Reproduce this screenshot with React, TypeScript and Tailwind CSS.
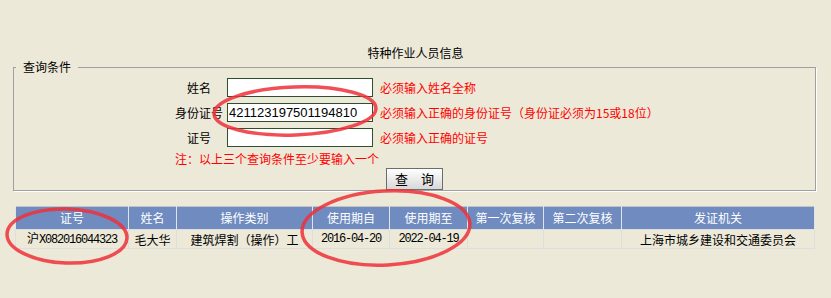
import React from "react";

const cols = [
  { title: "证号", cls: "w-[113px]" },
  { title: "姓名", cls: "w-[48px]" },
  { title: "操作类别", cls: "w-[136px]" },
  { title: "使用期自", cls: "w-[77px]" },
  { title: "使用期至", cls: "w-[78px]" },
  { title: "第一次复核", cls: "w-[76px]" },
  { title: "第二次复核", cls: "w-[78px]" },
  { title: "发证机关", cls: "w-[193px]" },
];

const QueryRow = ({ label, value, hint }: { label: string; value: string; hint: string }) => (
  <div className="flex h-[25px] items-center">
    <span className="w-[48px] text-center leading-[14px] whitespace-nowrap">{label}</span>
    <input
      readOnly
      defaultValue={value}
      className="ml-[4px] h-[19px] w-[146px] border border-[#2f4f2f] bg-white px-[1px] font-['Liberation_Sans',sans-serif] text-[13px] text-black outline-none"
    />
    <span className="ml-[7px] whitespace-nowrap leading-[14px] text-[#ff0000]">{hint}</span>
  </div>
);

export default function App() {
  return (
    <div className="relative h-[298px] w-[831px] overflow-hidden bg-[#ece9d8] pt-[46px] font-['Noto_Sans_CJK_SC',sans-serif] text-[12px] text-black">
      <div className="h-[14px] text-center leading-[14px]">特种作业人员信息</div>

      <fieldset className="ml-[13px] mr-[15px] border border-[#a0a0a0] p-0 shadow-[1px_1px_0_#ffffff]">
        <legend className="ml-[2px] px-[7px] leading-[14px]">查询条件</legend>
        <div className="pl-[161px] pt-[1px]">
          <QueryRow label="姓名" value="" hint="必须输入姓名全称" />
          <QueryRow
            label="身份证号"
            value="421123197501194810"
            hint="必须输入正确的身份证号（身份证必须为15或18位）"
          />
          <QueryRow label="证号" value="" hint="必须输入正确的证号" />
          <div className="h-[18px] leading-[18px] text-[#ff0000]">注：以上三个查询条件至少要输入一个</div>
          <div className="pl-[211px]">
            <button className="block h-[22px] w-[57px] border border-[#6d6d6d] bg-linear-to-b from-white to-[#d8d8d8] text-[13px] leading-[20px] text-black">
              查　询
            </button>
          </div>
        </div>
      </fieldset>

      <table className="ml-[15px] mt-[15px] w-[799px] table-fixed border-collapse border border-[#c3c3c3]">
        <thead>
          <tr className="h-[23px] bg-[#6f8bc0] text-white">
            {cols.map((c) => (
              <th key={c.title} className={`${c.cls} border-x border-[#dfe3ea] p-0 text-center font-normal leading-[14px]`}>
                {c.title}
              </th>
            ))}
          </tr>
        </thead>
        <tbody>
          <tr className="h-[17px]">
            <td className="border border-[#dedede] p-0 text-center leading-[15px]">
              沪<span className="font-['Liberation_Mono',monospace] text-[12px] tracking-[-1.2px]">X082016044323</span>
            </td>
            <td className="border border-[#dedede] p-0 text-center leading-[15px]">毛大华</td>
            <td className="border border-[#dedede] p-0 text-center leading-[15px]">建筑焊割（操作）工</td>
            <td className="border border-[#dedede] p-0 text-center font-['Liberation_Mono',monospace] text-[12px] leading-[15px] tracking-[-1.2px]">
              2016-04-20
            </td>
            <td className="border border-[#dedede] p-0 text-center font-['Liberation_Mono',monospace] text-[12px] leading-[15px] tracking-[-1.2px]">
              2022-04-19
            </td>
            <td className="border border-[#dedede] p-0"></td>
            <td className="border border-[#dedede] p-0"></td>
            <td className="border border-[#dedede] p-0 text-center leading-[15px]">上海市城乡建设和交通委员会</td>
          </tr>
        </tbody>
      </table>

      {/* hand-drawn red marks over the screenshot */}
      <svg className="pointer-events-none absolute left-0 top-0" width="831" height="298">
        <g fill="none" stroke="#ef3038" strokeWidth="3.5" strokeOpacity="0.85">
          <ellipse cx="295" cy="111" rx="81" ry="24" transform="rotate(-2 295 111)" />
          <ellipse cx="67" cy="236" rx="60" ry="27" transform="rotate(2 67 236)" />
          <ellipse cx="386" cy="228" rx="84" ry="37" transform="rotate(-3 386 228)" />
        </g>
      </svg>
    </div>
  );
}
